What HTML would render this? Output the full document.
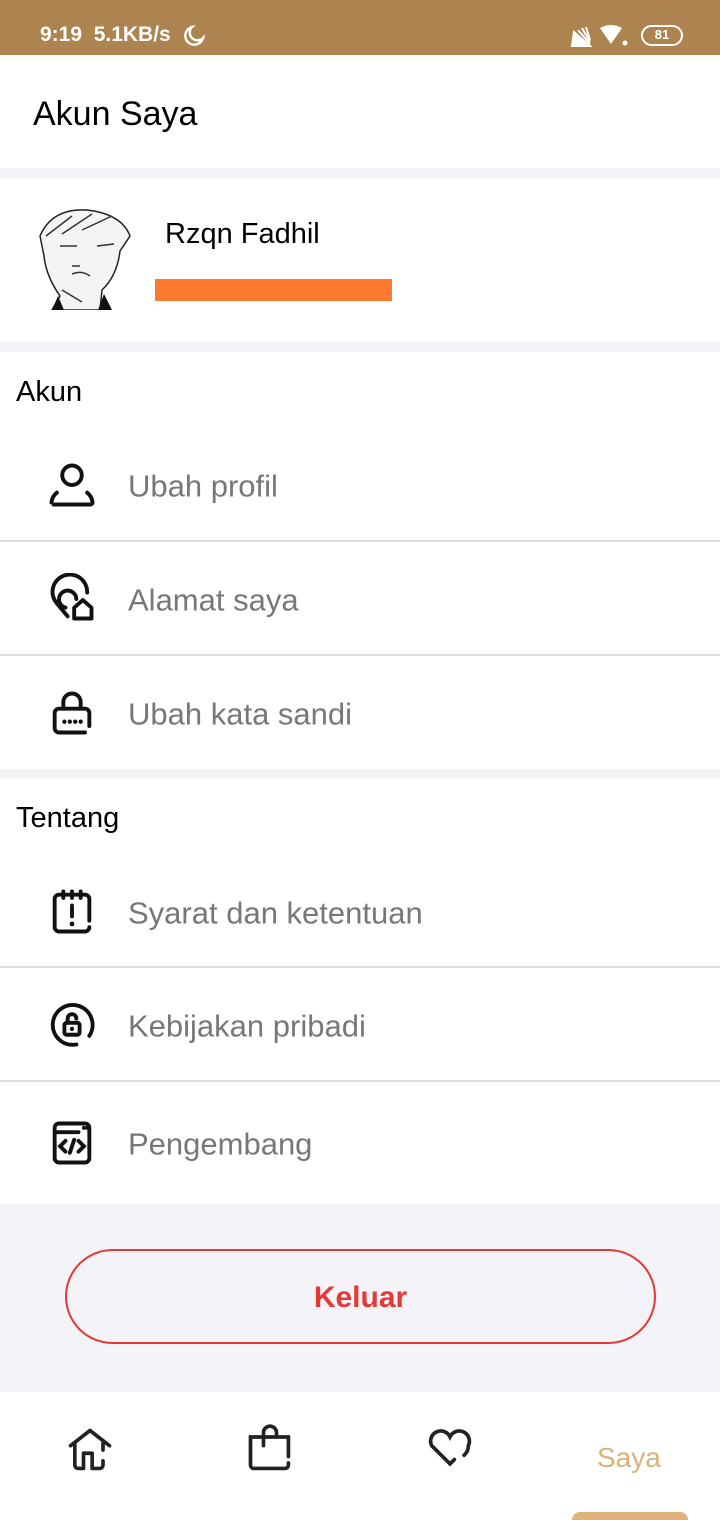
<!DOCTYPE html>
<html><head><meta charset="utf-8"><style>
*{margin:0;padding:0;box-sizing:border-box}
html,body{width:720px;height:1520px;overflow:hidden}
body{background:#f3f3f8;font-family:"Liberation Sans",sans-serif;position:relative}
.abs{position:absolute}
.sb{left:0;top:0;width:720px;height:55px;background:#ad844f;color:#fff;font-weight:bold;font-size:21px}
.white{background:#fff;left:0;width:720px}
.row{left:0;width:720px;height:113px;background:#fff}
.row .t{position:absolute;left:128px;top:50%;transform:translateY(-46%);font-size:31px;color:#777}
.row svg{position:absolute;left:46px;top:50%;transform:translateY(-50%)}
.sep{left:0;width:720px;height:2px;background:#dedede}
.h{font-size:29px;color:#000;left:16px}
</style></head><body>
<div class="abs sb">
 <span class="abs" style="left:40px;top:23px">9:19&nbsp; 5.1KB/s</span>
 <svg class="abs" style="left:183px;top:24px" width="24" height="24" viewBox="0 0 24 24"><path d="M9 3a9 9 0 1 0 11 11 7 7 0 0 1-11-11z" fill="none" stroke="#fff" stroke-width="2.4"/></svg>
 <svg class="abs" style="left:570px;top:24px" width="24" height="24" viewBox="0 0 24 24"><path d="M2 22L20 22L4 8ZM8 6L20 20M12 4L20 18M16 3L20 16" stroke="#fff" stroke-width="2" fill="#fff"/></svg>
 <svg class="abs" style="left:598px;top:24px" width="34" height="24" viewBox="0 0 34 24"><path d="M2 4Q13 -2 24 4L13 20Z" fill="#fff"/><circle cx="27" cy="19" r="2.5" fill="#fff"/></svg>
 <div class="abs" style="left:641px;top:25px;width:42px;height:21px;border:2.5px solid #fff;border-radius:11px;font-size:13px;text-align:center;line-height:16px">81</div>
</div>
<div class="abs white" style="top:55px;height:113px"><div class="abs" style="left:33px;top:40px;font-size:34px">Akun Saya</div></div>
<div class="abs white" style="top:178px;height:164px">
 <svg class="abs" style="left:32px;top:28px" width="100" height="104" viewBox="0 0 100 104"><path d="M8 30Q20 2 55 4Q90 8 98 30L88 45Q85 70 70 84L68 104H20L28 90Q14 70 12 50Z" fill="#f4f4f4" stroke="#222" stroke-width="1.5"/><path d="M14 30L40 10M30 28L60 8M50 24L80 10M28 40L45 40M65 40L82 38M40 68Q50 64 58 70M30 84L50 96M40 60L48 60" stroke="#333" stroke-width="1.5" fill="none"/><path d="M20 104L26 90L32 104ZM66 104L72 88L80 104Z" fill="#111"/></svg>
 <div class="abs" style="left:165px;top:40px;font-size:29px">Rzqn Fadhil</div>
 <div class="abs" style="left:155px;top:101px;width:237px;height:22px;background:#ff7a2f"></div>
</div>
<div class="abs white" style="top:352px;height:76px"><div class="abs h" style="top:24px">Akun</div></div>
<div class="abs row" style="top:428px"><svg width="52" height="52" viewBox="0 0 24 24" fill="none" stroke="#111" stroke-width="1.8" stroke-linecap="round"><circle cx="12" cy="7.5" r="4.5"/><path d="M3.5 21h17a1 1 0 0 0 1-1 7 7 0 0 0-2.5-4.5M5 15.5A7 7 0 0 0 2.5 20"/></svg><span class="t">Ubah profil</span></div>
<div class="abs sep" style="top:540px"></div>
<div class="abs row" style="top:542px"><svg width="52" height="52" viewBox="0 0 24 24" fill="none" stroke="#111" stroke-width="1.8" stroke-linecap="round" stroke-linejoin="round"><path d="M10 20L5 14A8 8 0 1 1 19 9"/><path d="M14 12a4 4 0 1 0-5 4"/><path d="M13 21v-5l4-3.5 4 3.5v5z"/></svg><span class="t">Alamat saya</span></div>
<div class="abs sep" style="top:654px"></div>
<div class="abs row" style="top:656px"><svg width="52" height="52" viewBox="0 0 24 24" fill="none" stroke="#111" stroke-width="1.8" stroke-linecap="round"><path d="M8 10V7a4 4 0 0 1 8 0v3"/><path d="M20 18v-6a2 2 0 0 0-2-2H6a2 2 0 0 0-2 2v7a2 2 0 0 0 2 2h12"/><path d="M8.5 16h0M11 16h0M13.5 16h0M16 16h0" stroke-width="2"/></svg><span class="t">Ubah kata sandi</span></div>
<div class="abs white" style="top:778px;height:77px"><div class="abs h" style="top:24px">Tentang</div></div>
<div class="abs row" style="top:855px"><svg width="52" height="52" viewBox="0 0 24 24" fill="none" stroke="#111" stroke-width="1.8" stroke-linecap="round"><path d="M20 16V6a2 2 0 0 0-2-2H6a2 2 0 0 0-2 2v13a2 2 0 0 0 2 2h12a2 2 0 0 0 2-2"/><path d="M8 2.5v3M12 2.5v3M16 2.5v3M12 9v5"/><path d="M12 17.5h0" stroke-width="2.2"/></svg><span class="t">Syarat dan ketentuan</span></div>
<div class="abs sep" style="top:966px"></div>
<div class="abs row" style="top:968px"><svg width="52" height="52" viewBox="0 0 24 24" fill="none" stroke="#111" stroke-width="1.8" stroke-linecap="round"><path d="M14 21A9.2 9.2 0 1 1 20 17"/><rect x="8.5" y="11" width="7" height="5.5" rx="1"/><path d="M10 11V9a2 2 0 0 1 4 0"/><path d="M12 13.8h0" stroke-width="2"/></svg><span class="t">Kebijakan pribadi</span></div>
<div class="abs sep" style="top:1080px"></div>
<div class="abs row" style="top:1082px;height:122px"><svg width="52" height="52" viewBox="0 0 24 24" fill="none" stroke="#111" stroke-width="1.8" stroke-linecap="round"><path d="M20 18V5a2 2 0 0 0-2-2H6a2 2 0 0 0-2 2v14a2 2 0 0 0 2 2h12a2 2 0 0 0 2-2M4 7h11"/><path d="M17.5 5h0M19 5h0" stroke-width="1.8"/><path d="M9 11l-2.5 2.5L9 16M15 11l2.5 2.5L15 16M13 10.5l-2 6"/></svg><span class="t">Pengembang</span></div>
<div class="abs" style="left:65px;top:1249px;width:591px;height:95px;border:2px solid #e53935;border-radius:48px;text-align:center;line-height:93px;color:#e53935;font-weight:bold;font-size:30px">Keluar</div>
<div class="abs white" style="top:1392px;height:128px;overflow:hidden">
 <svg class="abs" style="left:64px;top:32px" width="52" height="52" viewBox="0 0 24 24" fill="none" stroke="#222" stroke-width="1.7" stroke-linecap="round" stroke-linejoin="round"><path d="M3 10L12 3l9 7M5 9v10a1.5 1.5 0 0 0 1.5 1.5H9v-7h4v7h3.5A1.5 1.5 0 0 0 18 19v-2M18 9v3"/></svg>
 <svg class="abs" style="left:244px;top:32px" width="52" height="52" viewBox="0 0 24 24" fill="none" stroke="#222" stroke-width="1.7" stroke-linecap="round"><path d="M8 6H3v13a1.5 1.5 0 0 0 1.5 1.5H19a1.5 1.5 0 0 0 1.5-1.5v-1M20.5 15V6H14M9 10V4a3 3 0 0 1 6 0v2M9 6h6"/></svg>
 <svg class="abs" style="left:424px;top:34px" width="52" height="52" viewBox="0 0 24 24" fill="none" stroke="#222" stroke-width="1.7" stroke-linecap="round"><path d="M14 15.5l-2 2-8.5-8.5A4.5 4.5 0 0 1 12 5a4.5 4.5 0 0 1 8.5 4 6 6 0 0 1-2 4.5"/></svg>
 <div class="abs" style="left:597px;top:50px;font-size:28px;color:#dcb27a">Saya</div>
 <div class="abs" style="left:572px;top:120px;width:116px;height:20px;border-radius:8px;background:#deb27a"></div>
</div>
</body></html>
